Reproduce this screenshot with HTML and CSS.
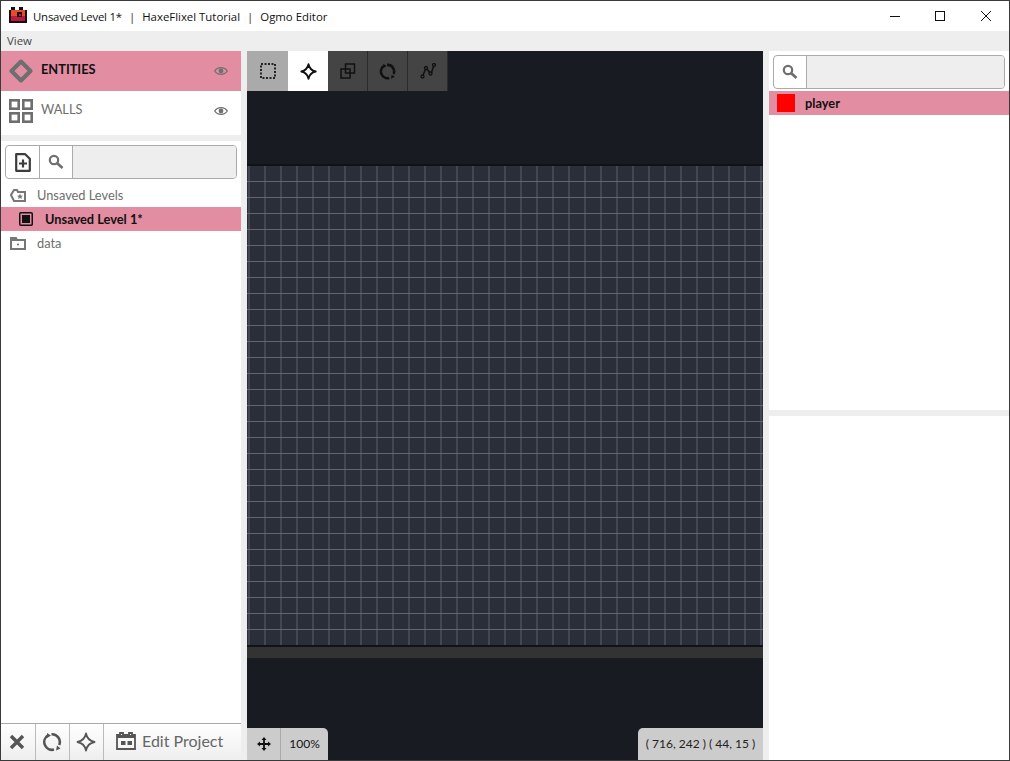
FILE: index.html
```html
<!DOCTYPE html>
<html lang="en">
<head>
<meta charset="utf-8">
<title>Ogmo Editor</title>
<link rel="stylesheet" href="styles.css">
</head>
<body>
<div class="window">
  <header class="titlebar">
    <svg class="app-icon" width="18" height="16" viewBox="0 0 18 16"><path d="M0 3h2V0h4v3h4V0h4v3h4v13H0z" fill="#111"/><rect x="2" y="3" width="14" height="11" fill="#ea4a2c"/><rect x="2" y="9" width="14" height="5" fill="#bd1a3e"/><rect x="8" y="5" width="5" height="5" fill="#111"/><rect x="10" y="7" width="2" height="2" fill="#bd1a3e"/></svg>
    <span class="title">Unsaved Level 1*</span><span class="sep">|</span><span class="title">HaxeFlixel Tutorial</span><span class="sep">|</span><span class="title">Ogmo Editor</span>
    <div class="win-controls">
      <svg width="10" height="10" viewBox="0 0 10 10"><path d="M0 5.500h10" stroke="#111"/></svg>
      <svg width="10" height="10" viewBox="0 0 10 10"><rect x=".5" y=".5" width="9" height="9" fill="none" stroke="#111"/></svg>
      <svg class="win-close" width="10" height="10" viewBox="0 0 10 10"><path d="M0 0l10 10M10 0L0 10" stroke="#111"/></svg>
    </div>
  </header>
  <nav class="menubar">View</nav>
  <main class="workspace">
    <aside class="left">
      <section class="layers">
        <div class="layer active">
          <svg class="layer-icon" width="24" height="24" viewBox="0 0 24 24"><path d="M12 2.500L21.500 12 12 21.500 2.500 12z" fill="none" stroke="#6e6e6e" stroke-width="4" stroke-linejoin="round"/></svg>
          <span class="layer-name">ENTITIES</span>
          <svg class="eye" width="14" height="12" viewBox="0 0 14 12"><path d="M.7 6C3.500 1.500 10.500 1.500 13.300 6 10.500 10.500 3.500 10.500.7 6z" fill="none" stroke="#707070" stroke-width="1.300"/><circle cx="7" cy="6" r="2.400" fill="#707070"/></svg>
        </div>
        <div class="layer">
          <svg class="layer-icon" width="24" height="24" viewBox="0 0 24 24"><g fill="none" stroke="#6e6e6e" stroke-width="2.600"><rect x="1.300" y="1.300" width="8.400" height="8.400"/><rect x="14.300" y="1.300" width="8.400" height="8.400"/><rect x="1.300" y="14.300" width="8.400" height="8.400"/><rect x="14.300" y="14.300" width="8.400" height="8.400"/></g></svg>
          <span class="layer-name">WALLS</span>
          <svg class="eye" width="14" height="12" viewBox="0 0 14 12"><path d="M.7 6C3.500 1.500 10.500 1.500 13.300 6 10.500 10.500 3.500 10.500.7 6z" fill="none" stroke="#707070" stroke-width="1.300"/><circle cx="7" cy="6" r="2.400" fill="#707070"/></svg>
        </div>
      </section>
      <section class="levels">
        <div class="search-box">
          <div class="search-btn">
            <svg width="16" height="19" viewBox="0 0 16 19"><path d="M1.200 1.200h9l4.600 4.600v12h-13.600z" fill="none" stroke="#3c3c3c" stroke-width="2.200" stroke-linejoin="round"/><path d="M8 6.500v8M4 10.500h8" stroke="#3c3c3c" stroke-width="2.200"/></svg>
          </div>
          <div class="search-btn">
            <svg width="16" height="16" viewBox="0 0 16 16"><circle cx="6" cy="6" r="4.200" fill="none" stroke="#707070" stroke-width="2.200"/><path d="M9 9l5.500 5" stroke="#707070" stroke-width="2.800"/></svg>
          </div>
          <div class="search-field"></div>
        </div>
        <ul class="tree">
          <li class="tree-row">
            <svg width="16" height="13" viewBox="0 0 16 13"><path d="M1 6l3-5h3l1 2h7v9H4z" fill="none" stroke="#777" stroke-width="2"/><path d="M10 4.500l.9 2 2 .2-1.500 1.400.4 2-1.800-1-1.800 1 .4-2-1.500-1.400 2-.2z" fill="#777"/></svg>
            <span>Unsaved Levels</span>
          </li>
          <li class="tree-row selected">
            <svg class="level-icon" width="14" height="14" viewBox="0 0 14 14"><rect x=".75" y=".75" width="12.500" height="12.500" rx="1" fill="none" stroke="#111" stroke-width="1.500"/><rect x="3" y="3" width="8" height="8" fill="#111"/></svg>
            <span>Unsaved Level 1*</span>
          </li>
          <li class="tree-row">
            <svg width="16" height="13" viewBox="0 0 16 13"><path d="M1 12V1h5l1 2h8v9z" fill="none" stroke="#777" stroke-width="2"/><rect x="1" y="2" width="14" height="2" fill="#777"/><circle cx="8" cy="7.500" r="1.100" fill="#777"/></svg>
            <span>data</span>
          </li>
        </ul>
      </section>
      <footer class="project-bar">
        <button class="bar-btn" type="button"><svg width="16" height="16" viewBox="0 0 16 16"><path d="M2 2l12 12M14 2L2 14" stroke="#555" stroke-width="3.400"/></svg></button>
        <button class="bar-btn" type="button"><svg width="20" height="20" viewBox="0 0 20 20"><path d="M6 3.400A7.800 7.800 0 0 0 12 17.600M9.500 2.200A7.800 7.800 0 0 1 17.200 13" fill="none" stroke="#555" stroke-width="2.600"/><path d="M5 1l4 2.500-4 2.500zM14 18.500l1-5 3.500 3z" fill="#555"/></svg></button>
        <button class="bar-btn" type="button"><svg width="20" height="20" viewBox="0 0 20 20"><path d="M10 1.500C11 6.500 13.500 9 18.500 10 13.500 11 11 13.500 10 18.500 9 13.500 6.500 11 1.500 10 6.500 9 9 6.500 10 1.500z" fill="none" stroke="#555" stroke-width="1.800" stroke-linejoin="round"/></svg></button>
        <button class="bar-btn edit" type="button"><svg width="20" height="18" viewBox="0 0 20 18"><path d="M1 3h3V1h3v2h6V1h3v2h3v14H1z" fill="none" stroke="#555" stroke-width="1.800"/><rect x="1" y="3" width="18" height="3" fill="#555"/><rect x="5" y="9" width="4.500" height="4" fill="#555"/><rect x="11.500" y="9" width="4.500" height="4" fill="#555"/></svg><span>Edit Project</span></button>
      </footer>
    </aside>
    <section class="center">
      <div class="tools">
        <div class="tool selected-alt"><svg width="16" height="16" viewBox="0 0 16 16"><rect x="1" y="1" width="14" height="14" fill="none" stroke="#222" stroke-width="2" stroke-dasharray="2 1.500"/></svg></div>
        <div class="tool selected"><svg width="17" height="17" viewBox="0 0 20 20"><path d="M10 1.500C11 6.500 13.500 9 18.500 10 13.500 11 11 13.500 10 18.500 9 13.500 6.500 11 1.500 10 6.500 9 9 6.500 10 1.500z" fill="none" stroke="#111" stroke-width="2.200" stroke-linejoin="round"/></svg></div>
        <div class="tool"><svg width="16" height="16" viewBox="0 0 16 16"><g fill="none" stroke="#111" stroke-width="1.500"><rect x="5.500" y="1" width="9" height="9"/><rect x="1" y="6" width="9" height="9"/></g></svg></div>
        <div class="tool"><svg width="17" height="17" viewBox="0 0 20 20"><path d="M6 3.400A7.800 7.800 0 0 0 12 17.600M9.500 2.200A7.800 7.800 0 0 1 17.200 13" fill="none" stroke="#111" stroke-width="3"/><path d="M5 1l4 2.500-4 2.500zM14 18.500l1-5 3.500 3z" fill="#111"/></svg></div>
        <div class="tool"><svg width="16" height="16" viewBox="0 0 16 16"><path d="M2.500 13.500L6 5l5 6 3-9" fill="none" stroke="#111" stroke-width="1.500"/><g fill="#444" stroke="#111" stroke-width="1.300"><circle cx="2.500" cy="13.500" r="1.500"/><circle cx="6" cy="5" r="1.500"/><circle cx="10.500" cy="10.500" r="1.500"/><circle cx="14" cy="2" r="1.500"/></g></svg></div>
      </div>
      <div class="canvas"></div>
      <div class="canvas-strip"></div>
      <div class="view-controls">
        <div class="pan"><svg width="14" height="14" viewBox="0 0 14 14"><path d="M7 0l2.500 3h-5zM7 14l-2.500-3h5zM0 7l3-2.500v5zM14 7l-3 2.500v-5z" fill="#111"/><path d="M7 2v10M2 7h10" stroke="#111" stroke-width="1.800"/></svg></div>
        <div class="zoom-level">100%</div>
      </div>
      <div class="coords">( 716, 242 ) ( 44, 15 )</div>
    </section>
    <aside class="right">
      <section class="palette">
        <div class="search-box compact">
          <div class="search-btn">
            <svg width="16" height="16" viewBox="0 0 16 16"><circle cx="6" cy="6" r="4.200" fill="none" stroke="#707070" stroke-width="2.200"/><path d="M9 9l5.500 5" stroke="#707070" stroke-width="2.800"/></svg>
          </div>
          <div class="search-field"></div>
        </div>
        <div class="entity">
          <span class="swatch"></span>
          <span>player</span>
        </div>
      </section>
      <section class="properties"></section>
    </aside>
  </main>
</div>
</body>
</html>
```

FILE: styles.css
```css
* { box-sizing: border-box; }
html, body { margin: 0; height: 100%; overflow: hidden; }
body { font-family: Lato, "Open Sans", sans-serif; font-size: 12.8px; color: #6e6e6e; }
ul { list-style: none; margin: 0; padding: 0; }
button { font: inherit; color: inherit; background: none; border: 0; padding: 0; }

.window {
  height: 761px;
  display: flex;
  flex-direction: column;
  background: #eee;
  border: 1px solid #3a3a3a;
}
.titlebar {
  height: 30px;
  flex: none;
  display: flex;
  align-items: center;
  background: #fff;
  padding-left: 8px;
  color: #111;
  font-family: "Open Sans", sans-serif;
  font-size: 11.4px;
}
.app-icon { margin: 0 6px 2px 0; }
.title { white-space: nowrap; }
.title:first-of-type { letter-spacing: -0.2px; }
.sep { margin: 0 7px; color: #3a2a4a; }
.win-controls { margin-left: auto; display: flex; align-items: center; gap: 35px; padding-right: 18px; }
.win-controls svg { display: block; }
.win-close { margin-left: 1px; }
.menubar {
  height: 20px;
  flex: none;
  background: #eee;
  padding: 2px 0 0 6px;
  color: #444;
  font-family: "Open Sans", sans-serif;
  font-size: 11.4px;
}
.workspace { flex: 1; min-height: 0; display: flex; gap: 6px; }

.left { width: 240px; flex: none; display: flex; flex-direction: column; }
.layers { height: 84px; flex: none; background: #fff; }
.layer { height: 40px; display: flex; align-items: center; padding: 0 13px 0 8px; }
.layer.active { background: #e28da2; color: #111; font-weight: 700; }
.layer-icon { flex: none; }
.layer-name { margin: 0 0 4px 8px; flex: 1; }
.layers + .levels { margin-top: 6px; }
.levels { flex: 1; min-height: 0; background: #fff; padding-top: 4px; }

.search-box {
  height: 34px;
  margin: 0 4px;
  display: flex;
  background: #fff;
  border: 1px solid #aaa;
  border-radius: 4px;
  overflow: hidden;
}
.search-btn {
  width: 33px;
  flex: none;
  display: flex;
  align-items: center;
  justify-content: center;
  border-right: 1px solid #aaa;
}
.levels .search-btn:first-child { width: 34px; }
.search-field { flex: 1; background: #eee; }
.tree { margin-top: 4px; }
.tree-row {
  height: 24px;
  display: flex;
  align-items: center;
  gap: 11px;
  padding-left: 9px;
}
.tree-row.selected { background: #e28da2; color: #111; font-weight: 700; padding-left: 18px; gap: 12px; }

.project-bar {
  height: 37px;
  flex: none;
  display: flex;
  padding-left: 1px;
  background: linear-gradient(#fff, #eee);
  border-top: 1px solid #aaa;
}
.bar-btn {
  width: 34px;
  flex: none;
  display: flex;
  align-items: center;
  justify-content: center;
  border-right: 1px solid #bbb;
}
.bar-btn svg { margin-right: 2px; }
.bar-btn:first-child svg { margin-right: 4px; }
.bar-btn.edit {
  width: auto;
  flex: 1;
  border: 0;
  justify-content: flex-start;
  padding: 0 0 3px 12px;
  gap: 6px;
  font-size: 16px;
  color: #666;
}
.bar-btn.edit svg { margin-right: 0; }

.center {
  width: 516px;
  flex: none;
  position: relative;
  background: #181b22;
  overflow: hidden;
}
.tools { height: 40px; display: flex; }
.tool {
  width: 40px;
  flex: none;
  display: flex;
  align-items: center;
  justify-content: center;
  background: #444;
  border-right: 1px solid #2b2b2b;
}
.tool.selected-alt { width: 41px; background: #aaa; border: 0; }
.tool.selected { background: #fff; border: 0; }
.canvas {
  height: 483px;
  margin-top: 73px;
  border-top: 2px solid #101216;
  border-bottom: 2px solid #101216;
  background-color: #2a2e39;
  background-size: 16px 16px;
  background-image:
    linear-gradient(to bottom, transparent 15px, #62656e 15px),
    linear-gradient(to right, transparent 1px, #434752 1px, #434752 3px, transparent 3px);
}
.canvas-strip { height: 11px; background: #333; }

.view-controls {
  position: absolute;
  left: 0;
  bottom: 0;
  height: 32px;
  display: flex;
  background: #ccc;
  border-top-right-radius: 5px;
  color: #111;
  font-size: 12px;
}
.pan {
  width: 34px;
  display: flex;
  align-items: center;
  justify-content: center;
  border-right: 1px solid #aaa;
}
.zoom-level { width: 47px; display: flex; align-items: center; justify-content: center; padding-bottom: 2px; }
.coords {
  position: absolute;
  right: 0;
  bottom: 0;
  width: 125px;
  height: 32px;
  display: flex;
  align-items: center;
  justify-content: center;
  padding-bottom: 2px;
  background: #ccc;
  border-top-left-radius: 5px;
  color: #222;
  font-size: 12px;
  white-space: nowrap;
}

.right { flex: 1; min-width: 0; display: flex; flex-direction: column; gap: 6px; }
.palette { height: 359px; flex: none; background: #fff; padding-top: 4px; }
.compact { height: 34px; margin: 0 4px; }
.entity {
  height: 24px;
  margin-top: 2px;
  display: flex;
  align-items: center;
  gap: 10px;
  padding-left: 8px;
  background: #e28da2;
  color: #111;
  font-weight: 700;
}
.swatch { width: 18px; height: 18px; background: #f00; }
.properties { flex: 1; background: #fff; }
```
